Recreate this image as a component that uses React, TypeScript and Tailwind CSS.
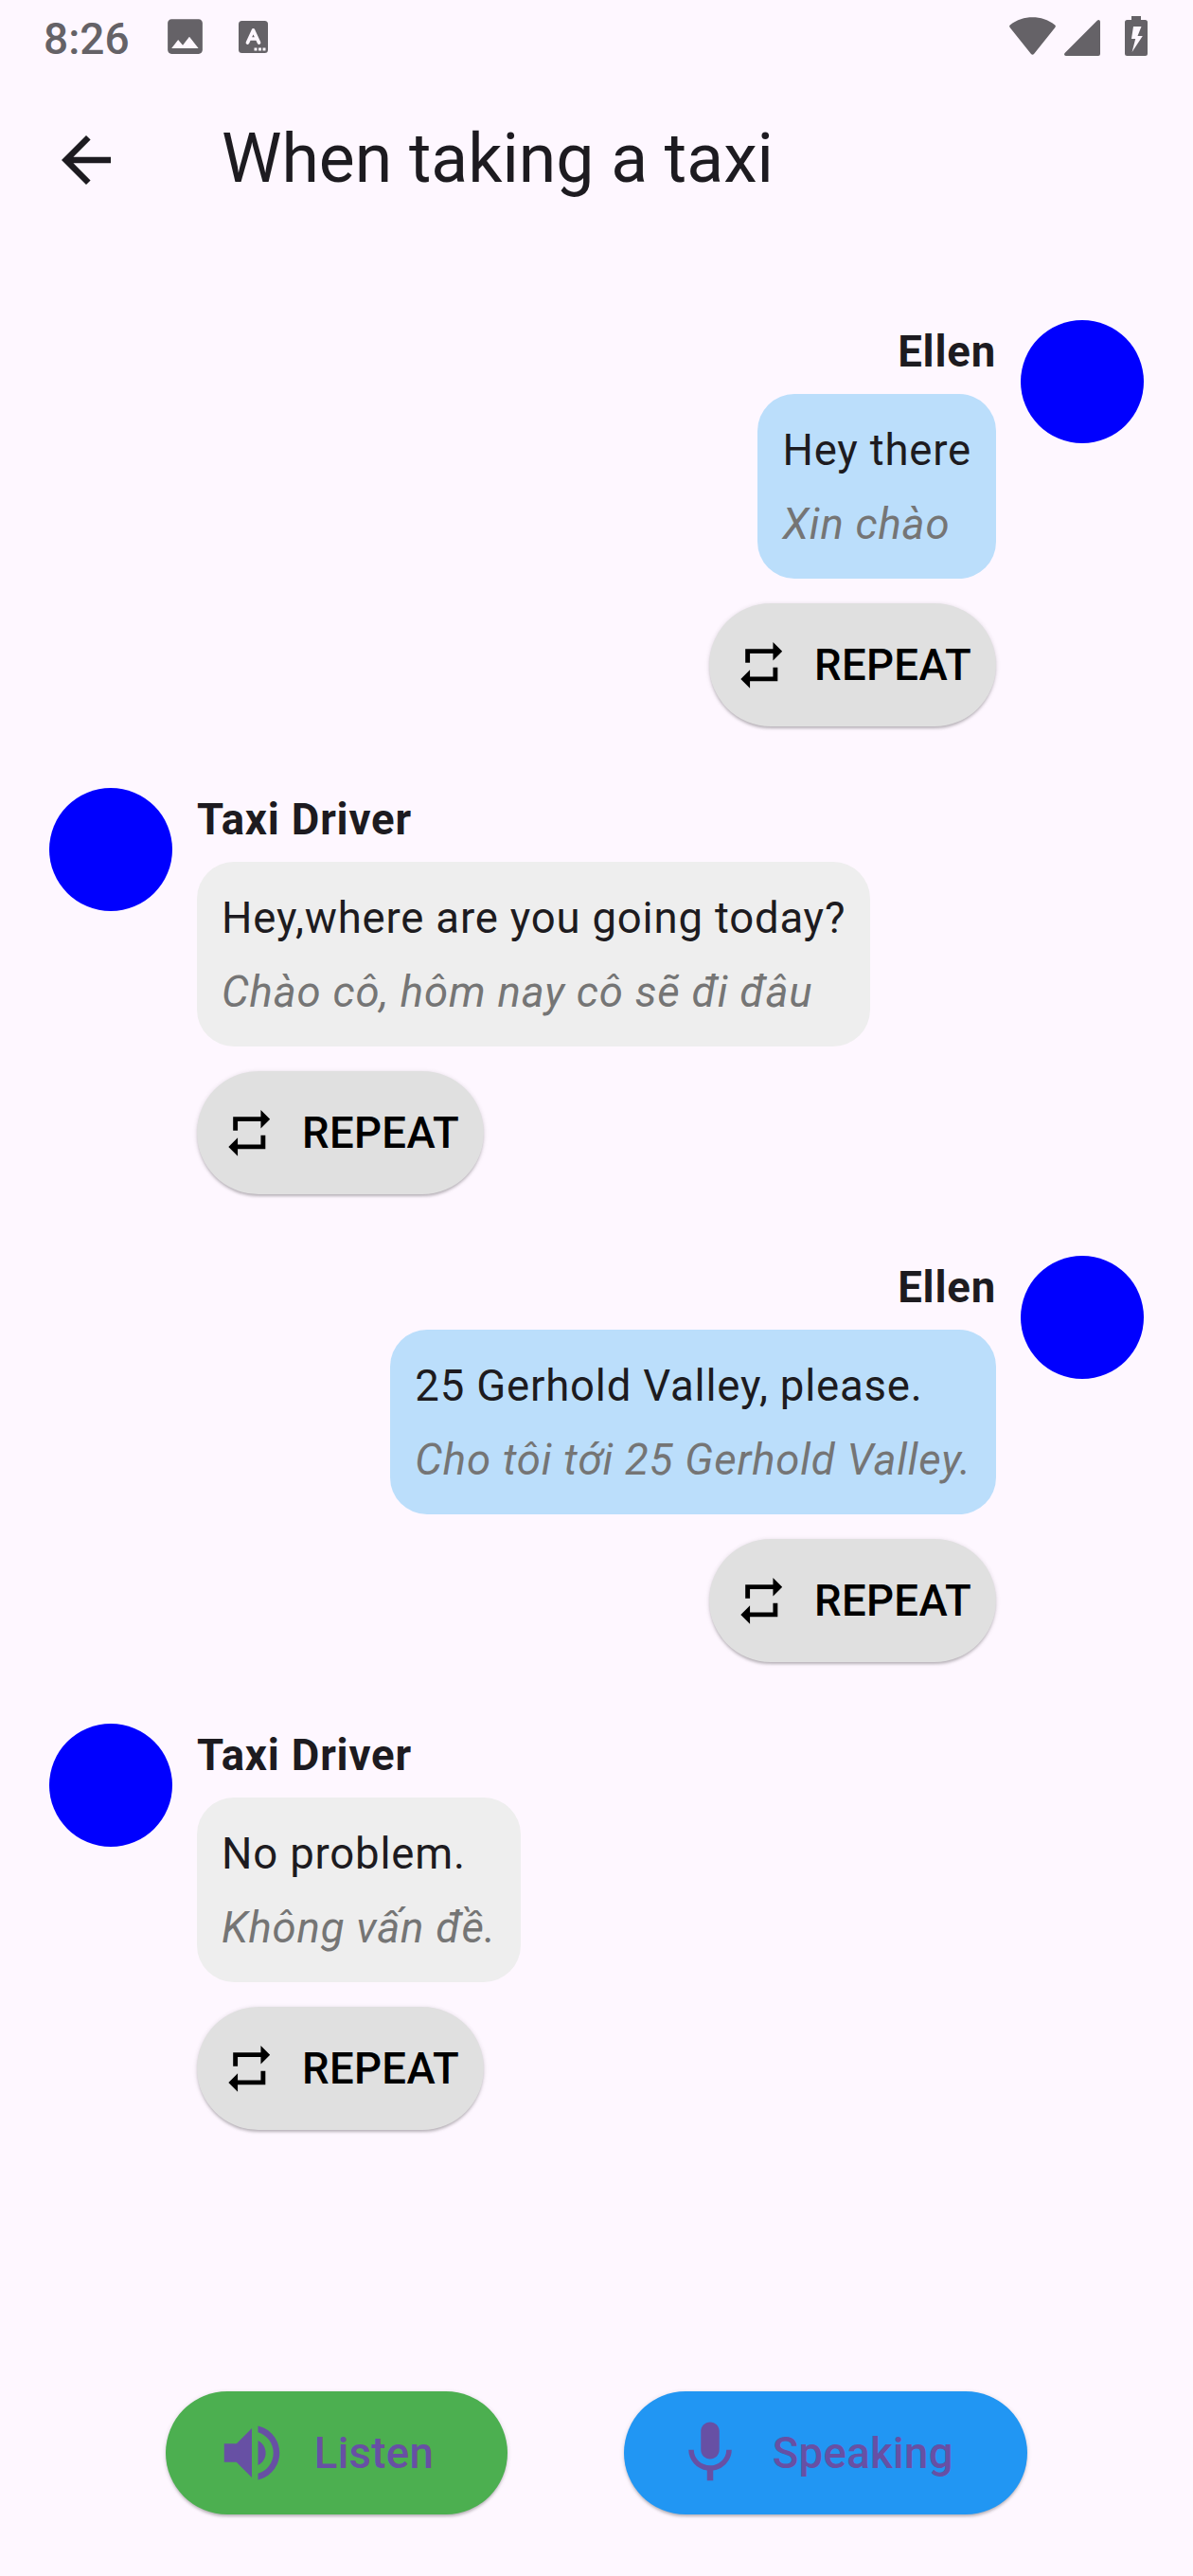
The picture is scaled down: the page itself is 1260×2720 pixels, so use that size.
import React from "react";

type Message = {
  speaker: string;
  text: string;
  translation: string;
  mine: boolean;
};

const messages: Message[] = [
  { speaker: "Ellen", text: "Hey there", translation: "Xin chào", mine: true },
  {
    speaker: "Taxi Driver",
    text: "Hey,where are you going today?",
    translation: "Chào cô, hôm nay cô sẽ đi đâu",
    mine: false,
  },
  {
    speaker: "Ellen",
    text: "25 Gerhold Valley, please.",
    translation: "Cho tôi tới 25 Gerhold Valley.",
    mine: true,
  },
  { speaker: "Taxi Driver", text: "No problem.", translation: "Không vấn đề.", mine: false },
];

const elevation =
  "shadow-[0_3px_3px_-1px_rgba(0,0,0,0.2),0_1px_5px_0_rgba(0,0,0,0.14)]";

function Icon({ d, className }: { d: string; className: string }) {
  return (
    <svg viewBox="0 0 24 24" fill="currentColor" className={className}>
      <path d={d} />
    </svg>
  );
}

function StatusBar() {
  return (
    <div className="flex h-[78px] items-start text-[#656267]">
      <span className="ml-[46px] mt-[14px] w-[92px] text-[46px] leading-[54px] font-medium">8:26</span>
      <Icon
        className="ml-[33px] mt-[14px] size-[49px]"
        d="M21 19V5c0-1.1-.9-2-2-2H5c-1.1 0-2 .9-2 2v14c0 1.1.9 2 2 2h14c1.1 0 2-.9 2-2zM5 18.100l3.400-4.400 2.400 2.800 3.400-4.400 4.700 6z"
      />
      <svg viewBox="0 0 31 34" className="ml-[32px] mt-[22px] h-[34px] w-[31px]">
        <rect width="31" height="34" rx="3.5" fill="currentColor" />
        <path
          d="M9.500 23 15.500 10 21.500 23M11.800 19h7.400"
          fill="none"
          stroke="#fef7ff"
          strokeWidth="3.7"
          strokeLinecap="round"
          strokeLinejoin="round"
        />
        <path d="M16.500 28.500h3v3h-3zM21 28.500h3v3h-3zM25.500 28.500h3v3h-3z" fill="#fef7ff" />
      </svg>
      <div className="ml-auto mr-[48px] mt-[17px] flex items-start">
        <svg viewBox="0 0 49 40" className="mt-px h-[40px] w-[49px]" fill="currentColor">
          <path d="M.6 10.900Q-.6 9.300 1 8.200C8 2.800 16 .3 24.500.3S41 2.800 48 8.200q1.600 1.100.4 2.700L26.200 38.800q-1.700 1.800-3.400 0z" />
        </svg>
        <svg viewBox="0 0 38 38" className="ml-[9px] mt-[4px] size-[38px]" fill="currentColor">
          <path d="M38 1.800V36q0 2-2 2H1.800Q-1 37.500.6 35L35 .6q2.500-1.400 3 1.200z" />
        </svg>
        <svg viewBox="0 0 24 42" className="ml-[26px] h-[42px] w-[24px]" fill="currentColor">
          <path
            fillRule="evenodd"
            d="M7 0h10v4h4.500Q24 4 24 6.500v33q0 2.500-2.500 2.500h-19Q0 42 0 39.500v-33Q0 4 2.500 4H7zM9 11 7 24h4.200L7.600 38 18.800 21h-5.300L17.500 11z"
          />
        </svg>
      </div>
    </div>
  );
}

function AppBar() {
  return (
    <header className="flex h-[182px] items-center">
      <button aria-label="Back" className="ml-[52px]">
        <Icon
          className="size-[78px]"
          d="M20 11H7.830l5.590-5.590L12 4l-8 8 8 8 1.410-1.410L7.830 13H20v-2z"
        />
      </button>
      <h1 className="ml-[104px] pb-[3px] text-[71.5px] leading-[91px]">When taking a taxi</h1>
    </header>
  );
}

function RepeatButton() {
  return (
    <button
      className={`mt-[26px] flex h-[130px] w-[303px] items-center gap-[26.5px] rounded-full bg-[#e0e0e0] pl-[26px] font-medium tracking-[0.325px] text-black ${elevation}`}
    >
      <Icon
        className="size-[58.5px] shrink-0"
        d="M7 7h10v3l4-4-4-4v3H5v6h2V7zm10 10H7v-3l-4 4 4 4v-3h12v-6h-2v4z"
      />
      REPEAT
    </button>
  );
}

function Conversation({ message }: { message: Message }) {
  const { speaker, text, translation, mine } = message;
  return (
    <li className={`flex items-start gap-[26px] ${mine ? "flex-row-reverse" : ""}`}>
      <div className="size-[130px] shrink-0 rounded-full bg-[#0000ff]" />
      <div className={`flex flex-col ${mine ? "items-end" : "items-start"}`}>
        <p className="leading-[67px] font-bold">{speaker}</p>
        <div
          className={`mt-[11px] flex flex-col gap-[11px] rounded-[39px] px-[26px] pt-[26px] pb-[24px] leading-[67px] whitespace-nowrap ${
            mine ? "bg-[#bbdefb]" : "bg-[#eeeeee]"
          }`}
        >
          <p>{text}</p>
          <p className="text-[#757575] italic">{translation}</p>
        </div>
        <RepeatButton />
      </div>
    </li>
  );
}

export default function App() {
  return (
    <div className="flex h-[2720px] w-[1260px] flex-col overflow-hidden bg-[#fef7ff] font-['Roboto',sans-serif] text-[45.5px] leading-[65px] text-[#1d1b20]">
      <StatusBar />
      <AppBar />
      <ul className="flex flex-1 flex-col gap-[65px] px-[52px] pt-[78px] tracking-[0.8125px]">
        {messages.map((m, i) => (
          <Conversation key={i} message={m} />
        ))}
      </ul>
      <footer className="flex justify-evenly px-[52px] pb-[65px] font-medium tracking-[0.325px] text-[#6750a4]">
        <button
          className={`flex h-[130px] w-[361px] items-center gap-[26.5px] rounded-full bg-[#4caf50] pl-[52.25px] ${elevation}`}
        >
          <Icon
            className="size-[78px]"
            d="M3 9v6h4l5 5V4L7 9H3zm13.500 3c0-1.770-1.020-3.290-2.500-4.030v8.050c1.480-.73 2.500-2.250 2.500-4.020zM14 3.230v2.060c2.890.86 5 3.540 5 6.710s-2.110 5.850-5 6.710v2.060c4.010-.91 7-4.490 7-8.770s-2.990-7.860-7-8.770z"
          />
          Listen
        </button>
        <button
          className={`flex h-[130px] w-[426px] items-center gap-[26.5px] rounded-full bg-[#2196f3] pl-[52.25px] ${elevation}`}
        >
          <Icon
            className="size-[78px]"
            d="M12 14c1.660 0 2.990-1.340 2.990-3L15 5c0-1.660-1.340-3-3-3S9 3.340 9 5v6c0 1.660 1.340 3 3 3zm5.300-3c0 3-2.540 5.100-5.300 5.100S6.700 14 6.700 11H5c0 3.410 2.720 6.230 6 6.720V21h2v-3.280c3.280-.48 6-3.300 6-6.720h-1.700z"
          />
          Speaking
        </button>
      </footer>
    </div>
  );
}
